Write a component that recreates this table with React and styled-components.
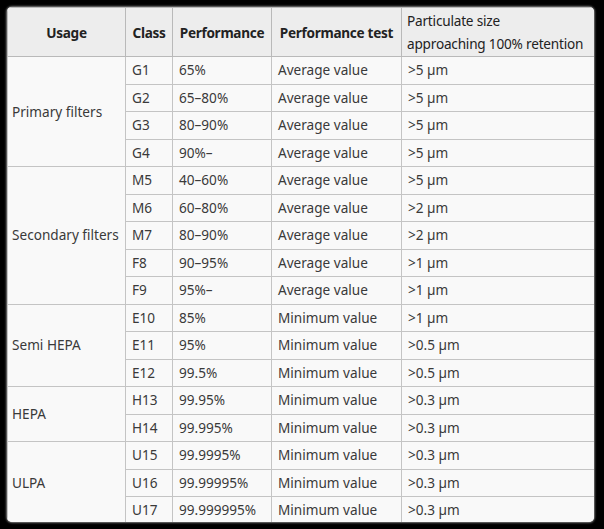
import styled, { createGlobalStyle } from "styled-components";

const GlobalStyle = createGlobalStyle`
    html, body {
        margin: 0;
        padding: 0;
        background: #000;
    }
    body {
        width: 604px;
        height: 529px;
        overflow: hidden;
        padding: 7px 0 0 7px;
        box-sizing: border-box;
    }
`;

const Frame = styled.div`
    width: 587px;
    height: 515px;
    overflow: hidden;
    border-radius: 5px;
    background: #f9f9f9;
    box-shadow: 0 0 2px 1px rgba(170, 170, 170, 0.7);
`;

const Table = styled.table`
    border-collapse: collapse;
    table-layout: fixed;
    width: 588px;
    font-family: "Noto Sans", "Open Sans", sans-serif;
    font-size: 13.6px;
    color: #3a3a3a;
    background: #f9f9f9;
`;

const HeadRow = styled.tr`
    height: 49px;
    background: #ededed;
`;

const Row = styled.tr`
    height: 27.5px;
`;

const Th = styled.th`
    border: 1px solid #b9b9b9;
    padding: 0 ${p => (p.$plain ? "5px" : "2px")};
    font-weight: ${p => (p.$plain ? 400 : 700)};
    text-align: ${p => (p.$plain ? "left" : "center")};
    letter-spacing: ${p => (p.$plain ? "-0.2px" : "-0.3px")};
    color: #222;
    line-height: 23px;
    vertical-align: middle;
    white-space: nowrap;
`;

const Td = styled.td`
    border: 1px solid #c4c4c4;
    padding: 0 6px;
    line-height: 22px;
    vertical-align: middle;
    white-space: nowrap;
`;

const GroupCell = styled(Td)`
    padding-left: 4px;
`;

const groups = [
    {
        usage: "Primary filters",
        rows: [
            ["G1", "65%", "Average value", ">5 µm"],
            ["G2", "65–80%", "Average value", ">5 µm"],
            ["G3", "80–90%", "Average value", ">5 µm"],
            ["G4", "90%–", "Average value", ">5 µm"],
        ],
    },
    {
        usage: "Secondary filters",
        rows: [
            ["M5", "40–60%", "Average value", ">5 µm"],
            ["M6", "60–80%", "Average value", ">2 µm"],
            ["M7", "80–90%", "Average value", ">2 µm"],
            ["F8", "90–95%", "Average value", ">1 µm"],
            ["F9", "95%–", "Average value", ">1 µm"],
        ],
    },
    {
        usage: "Semi HEPA",
        rows: [
            ["E10", "85%", "Minimum value", ">1 µm"],
            ["E11", "95%", "Minimum value", ">0.5 µm"],
            ["E12", "99.5%", "Minimum value", ">0.5 µm"],
        ],
    },
    {
        usage: "HEPA",
        rows: [
            ["H13", "99.95%", "Minimum value", ">0.3 µm"],
            ["H14", "99.995%", "Minimum value", ">0.3 µm"],
        ],
    },
    {
        usage: "ULPA",
        rows: [
            ["U15", "99.9995%", "Minimum value", ">0.3 µm"],
            ["U16", "99.99995%", "Minimum value", ">0.3 µm"],
            ["U17", "99.999995%", "Minimum value", ">0.3 µm"],
        ],
    },
];

function App() {
    return (
        <>
            <GlobalStyle />
            <Frame>
                <Table>
                    <colgroup>
                        <col style={{ width: 118 }} />
                        <col style={{ width: 47 }} />
                        <col style={{ width: 99 }} />
                        <col style={{ width: 130 }} />
                        <col style={{ width: 194 }} />
                    </colgroup>
                    <thead>
                        <HeadRow>
                            <Th>Usage</Th>
                            <Th>Class</Th>
                            <Th>Performance</Th>
                            <Th>Performance test</Th>
                            <Th $plain>
                                Particulate size
                                <br />
                                approaching 100% retention
                            </Th>
                        </HeadRow>
                    </thead>
                    <tbody>
                        {groups.map(group =>
                            group.rows.map((row, i) => (
                                <Row key={row[0]}>
                                    {i === 0 && (
                                        <GroupCell rowSpan={group.rows.length}>
                                            {group.usage}
                                        </GroupCell>
                                    )}
                                    {row.map((cell, j) => (
                                        <Td key={j}>{cell}</Td>
                                    ))}
                                </Row>
                            ))
                        )}
                    </tbody>
                </Table>
            </Frame>
        </>
    );
}

export default App;
